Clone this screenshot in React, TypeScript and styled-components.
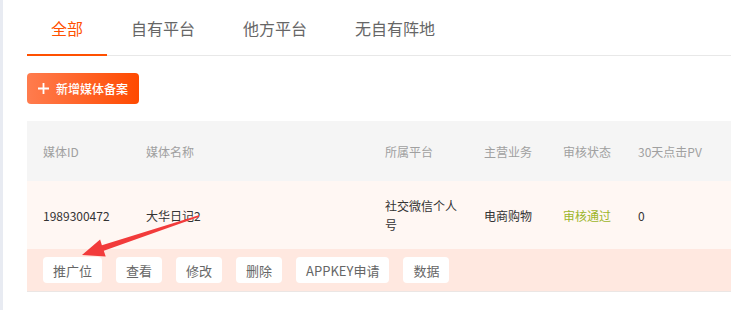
import styled, { createGlobalStyle } from "styled-components";

const GlobalStyle = createGlobalStyle`
  html, body {
    margin: 0;
    padding: 0;
    background: #fff;
    overflow: hidden;
  }

  body {
    font-family: "Noto Sans CJK SC", "Noto Sans", sans-serif;
    color: #333;
  }
`;

const Page = styled.div`
  position: relative;
  display: flex;
  width: 731px;
  height: 310px;
  overflow: hidden;
`;

const SideStrip = styled.div`
  width: 3px;
  flex: none;
  background: #e8ebf2;
`;

const Main = styled.div`
  flex: 1;
  padding-left: 24px;
  min-width: 0;
`;

const TabBar = styled.div`
  display: flex;
  height: 56px;
  border-bottom: 1px solid #e8e8e8;
  box-sizing: border-box;
`;

const Tab = styled.div<{ $active?: boolean }>`
  position: relative;
  display: flex;
  align-items: center;
  padding: 0 24px;
  font-size: 16px;
  color: ${({ $active }) => ($active ? "#ff5000" : "#666")};
  cursor: pointer;

  &::after {
    content: "";
    position: absolute;
    left: 0;
    right: 0;
    bottom: -1px;
    height: 2px;
    background: ${({ $active }) => ($active ? "#ff5000" : "transparent")};
  }
`;

const Toolbar = styled.div`
  display: flex;
  padding: 17px 0;
`;

const AddButton = styled.button`
  display: flex;
  align-items: center;
  gap: 7px;
  height: 31px;
  padding: 0 11px;
  border: none;
  border-radius: 4px;
  background: linear-gradient(90deg, #ff7c4e 0%, #ff4a00 100%);
  color: #fff;
  font-family: inherit;
  font-size: 12px;
  font-weight: 500;
  cursor: pointer;
`;

const Table = styled.div`
  width: 720px;
`;

const Grid = styled.div<{ $height: number; $bg: string }>`
  display: grid;
  grid-template-columns: 103px 239px 99px 79px 75px 1fr;
  align-items: center;
  height: ${({ $height }) => $height}px;
  background: ${({ $bg }) => $bg};
  font-size: 12px;
`;

const HeadCell = styled.div`
  padding: 0 8px 0 16px;
  color: #a0a0a0;
`;

const Cell = styled.div<{ $color?: string }>`
  padding: 0 8px 0 16px;
  color: ${({ $color }) => $color ?? "#333"};
  line-height: 19px;
`;

const ActionRow = styled.div`
  display: flex;
  align-items: center;
  gap: 14px;
  height: 42px;
  padding: 0 16px;
  background: #ffe8e0;
  border-bottom: 1px solid #ebe6e4;
`;

const ActionButton = styled.button`
  height: 26px;
  padding: 0 10px;
  border: none;
  border-radius: 4px;
  background: #fff;
  color: #666;
  font-family: inherit;
  font-size: 13px;
  cursor: pointer;
`;

const Annotation = styled.svg`
  position: absolute;
  left: 0;
  top: 0;
  pointer-events: none;
`;

const tabs = ["全部", "自有平台", "他方平台", "无自有阵地"];
const columns = ["媒体ID", "媒体名称", "所属平台", "主营业务", "审核状态", "30天点击PV"];
const actions = ["推广位", "查看", "修改", "删除", "APPKEY申请", "数据"];

function PlusIcon() {
  return (
    <svg width="11" height="11" viewBox="0 0 11 11">
      <path d="M5.5 0v11M0 5.5h11" stroke="#fff" strokeWidth="1.8" />
    </svg>
  );
}

export default function App() {
  return (
    <>
      <GlobalStyle />
      <Page>
        <SideStrip />
        <Main>
          <TabBar>
            {tabs.map((t, i) => (
              <Tab key={t} $active={i === 0}>
                {t}
              </Tab>
            ))}
          </TabBar>

          <Toolbar>
            <AddButton>
              <PlusIcon />
              新增媒体备案
            </AddButton>
          </Toolbar>

          <Table>
            <Grid $height={60} $bg="#f5f5f5">
              {columns.map((c) => (
                <HeadCell key={c}>{c}</HeadCell>
              ))}
            </Grid>
            <Grid $height={68} $bg="#fff7f3">
              <Cell>1989300472</Cell>
              <Cell>大华日记2</Cell>
              <Cell>社交微信个人号</Cell>
              <Cell>电商购物</Cell>
              <Cell $color="#9cb52a">审核通过</Cell>
              <Cell>0</Cell>
            </Grid>
            <ActionRow>
              {actions.map((a) => (
                <ActionButton key={a}>{a}</ActionButton>
              ))}
            </ActionRow>
          </Table>
        </Main>

        <Annotation width="731" height="310" viewBox="0 0 731 310">
          <polygon
            points="199.3,216.8 103.8,250.8 105.7,256.5 82,255 100.1,239.5 101.9,245.2 198.7,215.2"
            fill="#f23b3b"
          />
        </Annotation>
      </Page>
    </>
  );
}
